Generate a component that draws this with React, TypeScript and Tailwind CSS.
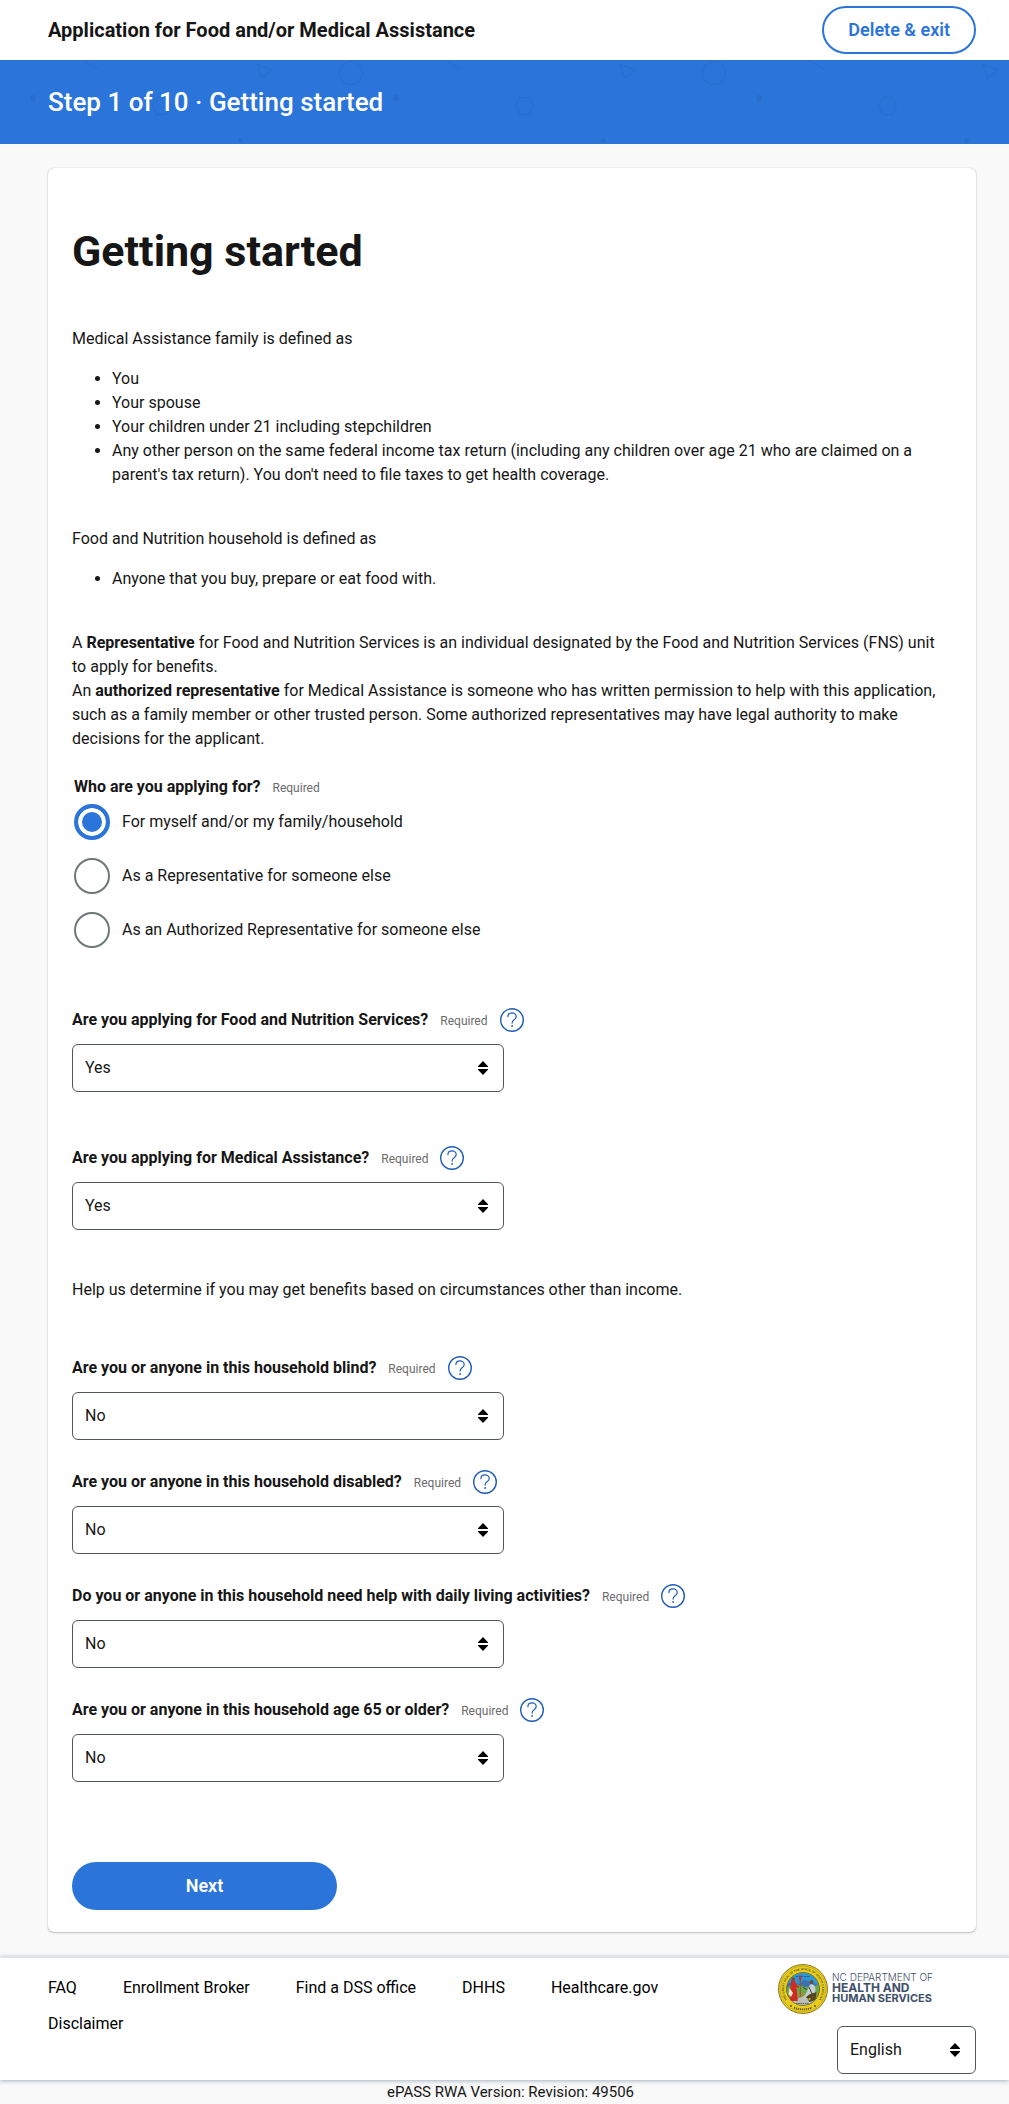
import { useId, useState } from "react";

function SelectArrows() {
  return (
    <svg
      className="pointer-events-none absolute top-1/2 right-4 h-[14px] w-[10px] -translate-y-1/2"
      viewBox="0 0 10 14"
      aria-hidden="true"
    >
      <path d="M5 0 10 5.2V6H0V5.2Z" fill="#000" />
      <path d="M5 14 0 8.8V8h10v.8Z" fill="#000" />
    </svg>
  );
}

function HelpIcon() {
  return (
    <svg className="block h-6 w-6" viewBox="0 0 24 24" fill="none" stroke="#1f5cb8" aria-hidden="true">
      <circle cx="12" cy="12" r="11.3" strokeWidth="1.4" />
      <path
        d="M7.9 8.6C7.9 6.4 9.7 4.9 12 4.9s4.2 1.5 4.2 3.6c0 1.7-1 2.5-2.1 3.3-1.2.9-2 1.5-2 3.3"
        strokeWidth="1.2"
        strokeLinecap="round"
      />
      <circle cx="12.1" cy="18" r=".9" fill="#1f5cb8" stroke="none" />
    </svg>
  );
}

function Required() {
  return <span className="pt-0.5 text-[12px] leading-5 text-[#6b6b6b]">Required</span>;
}

function Question({ label, initial }: { label: string; initial: string }) {
  const id = useId();
  const [value, setValue] = useState(initial);
  return (
    <div>
      <div className="flex items-center gap-3">
        <label htmlFor={id} className="font-bold">
          {label}
        </label>
        <Required />
        <button type="button" aria-label={`Help: ${label}`} className="shrink-0 rounded-full">
          <HelpIcon />
        </button>
      </div>
      <div className="mt-3 grid grid-cols-2 gap-4">
        <div className="relative">
          <select
            id={id}
            value={value}
            onChange={(e) => setValue(e.target.value)}
            className="block h-12 w-full appearance-none rounded-md border border-[#4f5756] bg-white px-3 text-[16px]"
          >
            <option>Yes</option>
            <option>No</option>
          </select>
          <SelectArrows />
        </div>
      </div>
    </div>
  );
}

function BannerPattern() {
  return (
    <svg className="absolute inset-0 h-full w-full" aria-hidden="true">
      <defs>
        <pattern id="confetti" width="363" height="200" patternUnits="userSpaceOnUse">
          <g fill="none" stroke="#276bc9" strokeWidth="1.5" opacity=".55">
            <path d="M82 0 98 9" />
            <path d="M257 4.500 272 10 261.500 18Z" />
            <circle cx="351" cy="13" r="11.500" />
            <path d="M157 37.500h9l4.500 8.500-4.500 8.500h-9l-4.500-8.500Z" />
          </g>
          <circle cx="33" cy="38" r="3" fill="#276bc9" opacity=".8" />
          <circle cx="240.500" cy="80.500" r="2.500" fill="#276bc9" opacity=".8" />
        </pattern>
      </defs>
      <rect width="100%" height="100%" fill="url(#confetti)" />
    </svg>
  );
}

function DepartmentLogo() {
  return (
    <svg className="block h-[50px] w-[156px]" viewBox="0 0 156 50" role="img" aria-label="NC Department of Health and Human Services">
      <defs>
        <path id="seal-ring" d="M11.500 38.500A19 19 0 1 1 38.500 38.500" />
        <clipPath id="seal-inner">
          <circle cx="25" cy="25" r="16.500" />
        </clipPath>
      </defs>
      <circle cx="25" cy="25" r="24.500" fill="#e8cd1e" stroke="#8c7a24" strokeWidth="1" />
      <circle cx="25" cy="25" r="22.800" fill="none" stroke="#b39b1f" strokeWidth=".6" />
      <text fontFamily="Liberation Sans, sans-serif" fontSize="3" fontWeight="700" fill="#5c5016">
        <textPath href="#seal-ring" startOffset="50%" textAnchor="middle">
          THE GREAT SEAL OF THE STATE OF NORTH CAROLINA
        </textPath>
      </text>
      <g clipPath="url(#seal-inner)">
        <rect x="8" y="8" width="34" height="34" fill="#2f96d4" />
        <path d="M8 21 15 17l6 3 5-4 7 2 9 4v6H8Z" fill="#3f6fae" />
        <path d="M8 24 17 20l10 3 15-2v12H8Z" fill="#69a84a" />
        <path d="M8 31 20 27l11 3 11-3v15H8Z" fill="#8c9a44" />
        <path d="M12 38 26 32l14 3-6 8H14Z" fill="#b9bdb4" />
        <path d="M15 15.500c1.500 0 2.400 1.300 2 3l2.500 3 1.800 1-.6 1.200-2.200-.6L19.800 37H11.500l1-14 .6-4.500c-.3-1.700.4-3 1.900-3Z" fill="#cf2a24" />
        <path d="M11.500 24 15 29l-2 4-2.500-3Z" fill="#f0e6d4" />
        <circle cx="15.200" cy="15" r="1.700" fill="#7b4a2b" />
        <path d="M22.300 13v20" stroke="#8c5a1f" strokeWidth="1" />
        <path d="M21 11.500h2.600l-.4 5h-1.800Z" fill="#cf2a24" />
        <circle cx="33.500" cy="18" r="1.900" fill="#6b4a36" />
        <path d="M32 20.500c3-1 5.500 1.500 5.500 5l-1 6-6.500 4-5-1 3.500-6Z" fill="#c9ced0" />
        <path d="M29 25.500 25 23.500M31 23 34 30 28 34" stroke="#38424a" strokeWidth="1" fill="none" />
        <path d="M28.500 33c2-3 7-4 10-5l-1 8-6 2Z" fill="#4a4a20" />
        <circle cx="31.500" cy="35" r="1.100" fill="#e8b51e" />
        <circle cx="34.500" cy="33" r="1.100" fill="#cf2a24" />
        <path d="M18 12.500h14" stroke="#1d5f96" strokeWidth="1" strokeDasharray="2 .7" />
        <path d="M18 39.500h13" stroke="#52584a" strokeWidth=".9" strokeDasharray="1.600 .6" />
      </g>
      <circle cx="25" cy="25" r="16.500" fill="none" stroke="#7d6d1c" strokeWidth=".8" />
      <path d="M16 43.600Q25 47.300 34 43.600" fill="none" stroke="#5c5016" strokeWidth="1.800" strokeDasharray="1.200 .8" />
      <circle cx="13" cy="42" r=".9" fill="#5c5016" />
      <circle cx="37" cy="42" r=".9" fill="#5c5016" />
      <g fontFamily="Inter, sans-serif" fill="#3e5068">
        <text x="54" y="17" fontSize="10" fontWeight="300">NC DEPARTMENT OF</text>
        <text x="54" y="28" fontSize="12" fontWeight="700">HEALTH AND</text>
        <text x="54" y="38" fontSize="11" fontWeight="700">HUMAN SERVICES</text>
      </g>
    </svg>
  );
}

const applicants = [
  "For myself and/or my family/household",
  "As a Representative for someone else",
  "As an Authorized Representative for someone else",
];

const footerLinks = ["FAQ", "Enrollment Broker", "Find a DSS office", "DHHS", "Healthcare.gov", "Disclaimer"];

export default function App() {
  const [applicant, setApplicant] = useState(0);
  return (
    <div className="min-h-screen bg-[#f9f9f9] font-['Roboto',sans-serif] text-[16px] leading-6 text-[#161616]">
      <header className="flex h-[60px] items-center justify-between bg-white pr-[33px] pl-12">
        <span className="text-[20px] font-bold">Application for Food and/or Medical Assistance</span>
        <button
          type="button"
          className="h-12 rounded-full border-2 border-[#2b74da] px-6 text-[18px] font-semibold text-[#2b74da]"
        >
          Delete &amp; exit
        </button>
      </header>

      <div className="relative flex h-[84px] items-center overflow-hidden bg-[#2b74da] px-12">
        <BannerPattern />
        <p className="relative text-[26px] font-medium text-white">Step 1 of 10 · Getting started</p>
      </div>

      <main className="py-6 pr-[33px] pl-12">
        <form
          onSubmit={(e) => e.preventDefault()}
          className="rounded-md bg-white px-6 pt-14 pb-[22px] shadow-[0_0_1px_rgba(0,0,0,0.3),0_1px_2px_rgba(0,0,0,0.22)]"
        >
          <h1 className="text-[43px] leading-[55px] font-bold">Getting started</h1>

          <p className="mt-12">Medical Assistance family is defined as</p>
          <ul className="mt-4 list-disc pl-10">
            <li>You</li>
            <li>Your spouse</li>
            <li>Your children under 21 including stepchildren</li>
            <li>
              Any other person on the same federal income tax return (including any children over age 21 who are
              claimed on a<br />
              parent's tax return). You don't need to file taxes to get health coverage.
            </li>
          </ul>

          <p className="mt-10">Food and Nutrition household is defined as</p>
          <ul className="mt-4 list-disc pl-10">
            <li>Anyone that you buy, prepare or eat food with.</li>
          </ul>

          <p className="mt-10">
            A <b>Representative</b> for Food and Nutrition Services is an individual designated by the Food and
            Nutrition Services (FNS) unit
            <br />
            to apply for benefits.
          </p>
          <p>
            An <b>authorized representative</b> for Medical Assistance is someone who has written permission to help
            with this application,
            <br />
            such as a family member or other trusted person. Some authorized representatives may have legal authority
            to make
            <br />
            decisions for the applicant.
          </p>

          <fieldset className="mt-6 px-0.5">
            <legend className="flex items-center gap-3">
              <span className="font-bold">Who are you applying for?</span>
              <Required />
            </legend>
            <div className="mt-[5px] flex flex-col items-start gap-[18px]">
              {applicants.map((text, i) => (
                <label key={text} className="flex items-center gap-3">
                  <input
                    type="radio"
                    name="applicant"
                    checked={applicant === i}
                    onChange={() => setApplicant(i)}
                    className="h-9 w-9 shrink-0 appearance-none rounded-full border-2 border-[#6f7878] bg-white checked:border-4 checked:border-[#2b74da] checked:bg-[#2b74da] checked:shadow-[inset_0_0_0_4px_white]"
                  />
                  {text}
                </label>
              ))}
            </div>
          </fieldset>

          <div className="mt-[60px] flex flex-col gap-[54px]">
            <Question label="Are you applying for Food and Nutrition Services?" initial="Yes" />
            <Question label="Are you applying for Medical Assistance?" initial="Yes" />
          </div>

          <p className="mt-12">
            Help us determine if you may get benefits based on circumstances other than income.
          </p>

          <div className="mt-[54px] flex flex-col gap-[30px]">
            <Question label="Are you or anyone in this household blind?" initial="No" />
            <Question label="Are you or anyone in this household disabled?" initial="No" />
            <Question
              label="Do you or anyone in this household need help with daily living activities?"
              initial="No"
            />
            <Question label="Are you or anyone in this household age 65 or older?" initial="No" />
          </div>

          <button
            type="submit"
            className="mt-20 block h-12 w-[265px] rounded-full bg-[#2b74da] text-[18px] font-semibold text-white"
          >
            Next
          </button>
        </form>
      </main>

      <footer>
        <div className="flex items-start justify-between gap-6 border-t-2 border-[#e3e3e3] bg-white pt-1.5 pr-[33px] pb-1.5 pl-12 text-black shadow-[0_1px_4px_rgba(80,110,140,0.5)]">
          <nav aria-label="Footer" className="flex flex-1 flex-wrap gap-x-[46px] pt-1.5 leading-9">
            {footerLinks.map((link) => (
              <a key={link} href="#">
                {link}
              </a>
            ))}
          </nav>
          <div className="flex flex-col items-end gap-3">
            <a href="#" className="mr-[42px]">
              <DepartmentLogo />
            </a>
            <div className="relative w-[139px]">
              <select
                aria-label="Language"
                className="block h-12 w-full appearance-none rounded-md border border-[#4f5756] bg-white px-3 text-[16px] text-[#161616]"
              >
                <option>English</option>
                <option>Español</option>
              </select>
              <SelectArrows />
            </div>
          </div>
        </div>
        <p className="pl-3 text-center text-[15px]">ePASS RWA Version: Revision: 49506</p>
      </footer>
    </div>
  );
}
